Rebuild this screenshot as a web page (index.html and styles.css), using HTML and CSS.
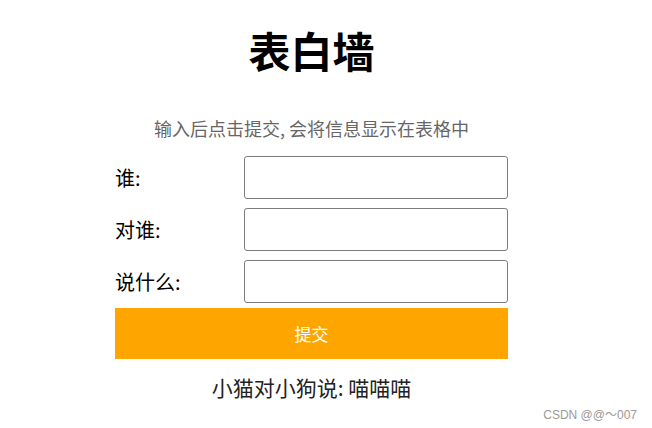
FILE: index.html
```html
<!DOCTYPE html>
<html lang="zh-CN">
<head>
<meta charset="utf-8">
<title>表白墙</title>
<link rel="stylesheet" href="styles.css">
</head>
<body>
<div class="wall">
  <h1 class="title">表白墙</h1>
  <p class="hint">输入后点击提交, 会将信息显示在表格中</p>
  <div class="row"><span class="label">谁:</span><input class="field" type="text"></div>
  <div class="row"><span class="label">对谁:</span><input class="field" type="text"></div>
  <div class="row"><span class="label">说什么:</span><input class="field" type="text"></div>
  <button class="submit">提交</button>
  <div class="message">小猫对小狗说: 喵喵喵</div>
</div>
<div class="watermark">CSDN @@～007</div>
</body>
</html>
```
FILE: styles.css
```css
html, body {
  margin: 0;
  padding: 0;
  background: #fff;
}
body {
  font-family: "Noto Sans CJK SC", "Noto Sans", sans-serif;
  color: #000;
  width: 652px;
  height: 428px;
  position: relative;
  overflow: hidden;
}
.wall {
  margin-left: 115px;
  width: 393px;
  display: flex;
  flex-direction: column;
}
.title {
  margin: 0;
  padding-top: 25px;
  font-size: 42px;
  line-height: 50px;
  font-weight: bold;
  text-align: center;
}
.hint {
  margin: 41px 0 0;
  font-size: 18px;
  line-height: 25px;
  color: #666;
  text-align: center;
}
.row {
  display: flex;
  align-items: center;
  justify-content: space-between;
  height: 43px;
  margin-top: 9px;
}
.hint + .row {
  margin-top: 15px;
}
.label {
  font-size: 20px;
  line-height: 24px;
}
.field {
  box-sizing: border-box;
  width: 264px;
  height: 43px;
  margin: 0;
  border: 1px solid #7d7d7d;
  border-radius: 3px;
  background: #fff;
  outline: none;
}
.submit {
  margin-top: 5px;
  height: 51px;
  width: 393px;
  border: none;
  background: #ffa500;
  color: #fff;
  font-family: "Noto Sans CJK SC", sans-serif;
  font-size: 17px;
}
.message {
  margin-top: 16px;
  font-size: 21px;
  line-height: 24px;
  color: #222;
  text-align: center;
}
.watermark {
  position: absolute;
  right: 15px;
  bottom: 6px;
  font-family: "Liberation Sans", sans-serif;
  font-size: 12px;
  color: #9a9a9a;
}
```
